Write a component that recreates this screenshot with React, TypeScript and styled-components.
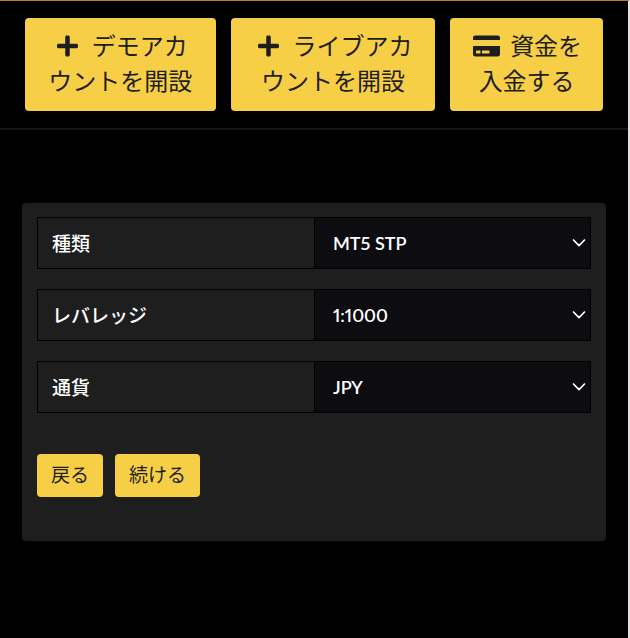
import React from "react";
import styled, { createGlobalStyle } from "styled-components";
import { FaPlus, FaCreditCard } from "react-icons/fa";

const GlobalStyle = createGlobalStyle`
  *, *::before, *::after { box-sizing: border-box; }
  body {
    margin: 0;
    background: #000;
    color: #fff;
    font-family: Lato, "Noto Sans CJK JP", sans-serif;
  }
`;

const Page = styled.div`
  min-height: 100vh;
  border-top: 1px solid #b87c2c;
  border-right: 2px solid #e9e1da;
  background: #000;
`;

const Header = styled.header`
  display: grid;
  grid-template-columns: 191fr 205fr 153fr;
  gap: 15px;
  padding: 17px 25px;
  border-bottom: 2px solid #161616;
`;

const Button = styled.button`
  border: 0;
  border-radius: 4px;
  background: #f7cf47;
  color: #1e1e1e;
  font-family: "Noto Sans CJK JP", sans-serif;
  font-weight: 400;
  cursor: pointer;
`;

const ActionButton = styled(Button)`
  padding: 9px 0 14px;
  font-size: 24px;
  line-height: 35px;
  white-space: nowrap;
`;

const ActionLine = styled.span`
  display: flex;
  align-items: center;
  justify-content: center;
  gap: 9px;
`;

const IconSlot = styled.span`
  display: flex;
  justify-content: center;
  width: 30px;
  padding-top: 2px;

  svg {
    width: 27px;
    height: 24px;
  }
`;

const Main = styled.main`
  padding: 73px 22px;
`;

const Panel = styled.form`
  padding: 14px 15px 44px;
  border-radius: 4px;
  background: #1e1e1e;
`;

const Fields = styled.div`
  display: grid;
  gap: 20px;
`;

const Field = styled.div`
  display: grid;
  grid-template-columns: 1fr 1fr;
  height: 52px;
  border: 1px solid #000;
`;

const Label = styled.label`
  display: flex;
  align-items: center;
  padding: 0 14px 2px;
  font-family: "Noto Sans CJK JP", sans-serif;
  font-size: 19px;
  font-weight: 500;
`;

const SelectBox = styled.div`
  position: relative;
  display: grid;
  border-left: 1px solid #000;
  background: #0d0c11;
`;

const Select = styled.select`
  appearance: none;
  width: 100%;
  padding: 0 40px 0 18px;
  border: 0;
  border-radius: 0;
  background: transparent;
  color: #fff;
  font-family: Lato, sans-serif;
  font-size: 18px;
  font-weight: 600;
  font-variant-numeric: proportional-nums;
`;

const Chevron = styled.svg`
  position: absolute;
  top: 50%;
  right: 4px;
  width: 14px;
  height: 10px;
  margin-top: -5px;
  pointer-events: none;
`;

const Actions = styled.div`
  display: flex;
  gap: 12px;
  margin-top: 41px;
`;

const FormButton = styled(Button)`
  padding: 6px 14px 9px;
  font-size: 19px;
  line-height: 28px;
`;

const headerActions = [
  { icon: FaPlus, lines: ["デモアカ", "ウントを開設"] },
  { icon: FaPlus, lines: ["ライブアカ", "ウントを開設"] },
  { icon: FaCreditCard, lines: ["資金を", "入金する"] },
];

const fields = [
  { id: "type", label: "種類", value: "MT5 STP" },
  { id: "leverage", label: "レバレッジ", value: "1:1000" },
  { id: "currency", label: "通貨", value: "JPY" },
];

export default function App() {
  return (
    <>
      <GlobalStyle />
      <Page lang="ja">
        <Header>
          {headerActions.map(({ icon: Icon, lines }) => (
            <ActionButton type="button" key={lines.join("")}>
              <ActionLine>
                <IconSlot>
                  <Icon aria-hidden="true" />
                </IconSlot>
                {lines[0]}
              </ActionLine>
              <ActionLine>{lines[1]}</ActionLine>
            </ActionButton>
          ))}
        </Header>
        <Main>
          <Panel>
            <Fields>
              {fields.map(({ id, label, value }) => (
                <Field key={id}>
                  <Label htmlFor={id}>{label}</Label>
                  <SelectBox>
                    <Select id={id} defaultValue={value}>
                      <option>{value}</option>
                    </Select>
                    <Chevron viewBox="0 0 14 10" aria-hidden="true">
                      <path
                        d="M1.5 2 7 7.7 12.5 2"
                        fill="none"
                        stroke="#fff"
                        strokeWidth="1.7"
                        strokeLinecap="round"
                        strokeLinejoin="round"
                      />
                    </Chevron>
                  </SelectBox>
                </Field>
              ))}
            </Fields>
            <Actions>
              <FormButton type="button">戻る</FormButton>
              <FormButton type="button">続ける</FormButton>
            </Actions>
          </Panel>
        </Main>
      </Page>
    </>
  );
}
